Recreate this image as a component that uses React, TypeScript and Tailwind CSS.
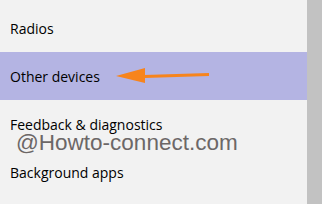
import React from "react";

const rows = [
  { label: "Radios", active: false },
  { label: "Other devices", active: true },
  { label: "Feedback & diagnostics", active: false },
  { label: "Background apps", active: false },
];

export default function App() {
  return (
    <div className="relative flex h-[204px] w-[322px] overflow-hidden bg-[#f2f2f2]" style={{ fontFamily: '"Open Sans", "Noto Sans", sans-serif' }}>
      <div className="flex w-[307px] flex-col pt-[4px]">
        {rows.map((r) => (
          <div
            key={r.label}
            className={`relative flex h-12 items-center pl-[10px] text-[14px] leading-5 text-black ${r.active ? "bg-[#b4b4e3]" : ""}`}
          >
            <span className="pt-[1px]">{r.label}</span>
            {r.active && (
              <svg className="absolute left-[114px] top-[14px]" width="98" height="18" viewBox="0 0 98 18">
                <polygon points="2,10 31,2 31,17" fill="#f7841c" />
                <line x1="30" y1="10.5" x2="95" y2="8.5" stroke="#f7841c" strokeWidth="3" />
              </svg>
            )}
          </div>
        ))}
      </div>
      <div className="w-[15px] bg-[#c2c2c2]" />
      <div
        className="absolute left-[16px] top-[131px] text-[22.5px] leading-6 text-[#6c6767]"
        style={{ fontFamily: '"Liberation Sans", Arial, sans-serif' }}
      >
        @Howto-connect.com
      </div>
    </div>
  );
}
